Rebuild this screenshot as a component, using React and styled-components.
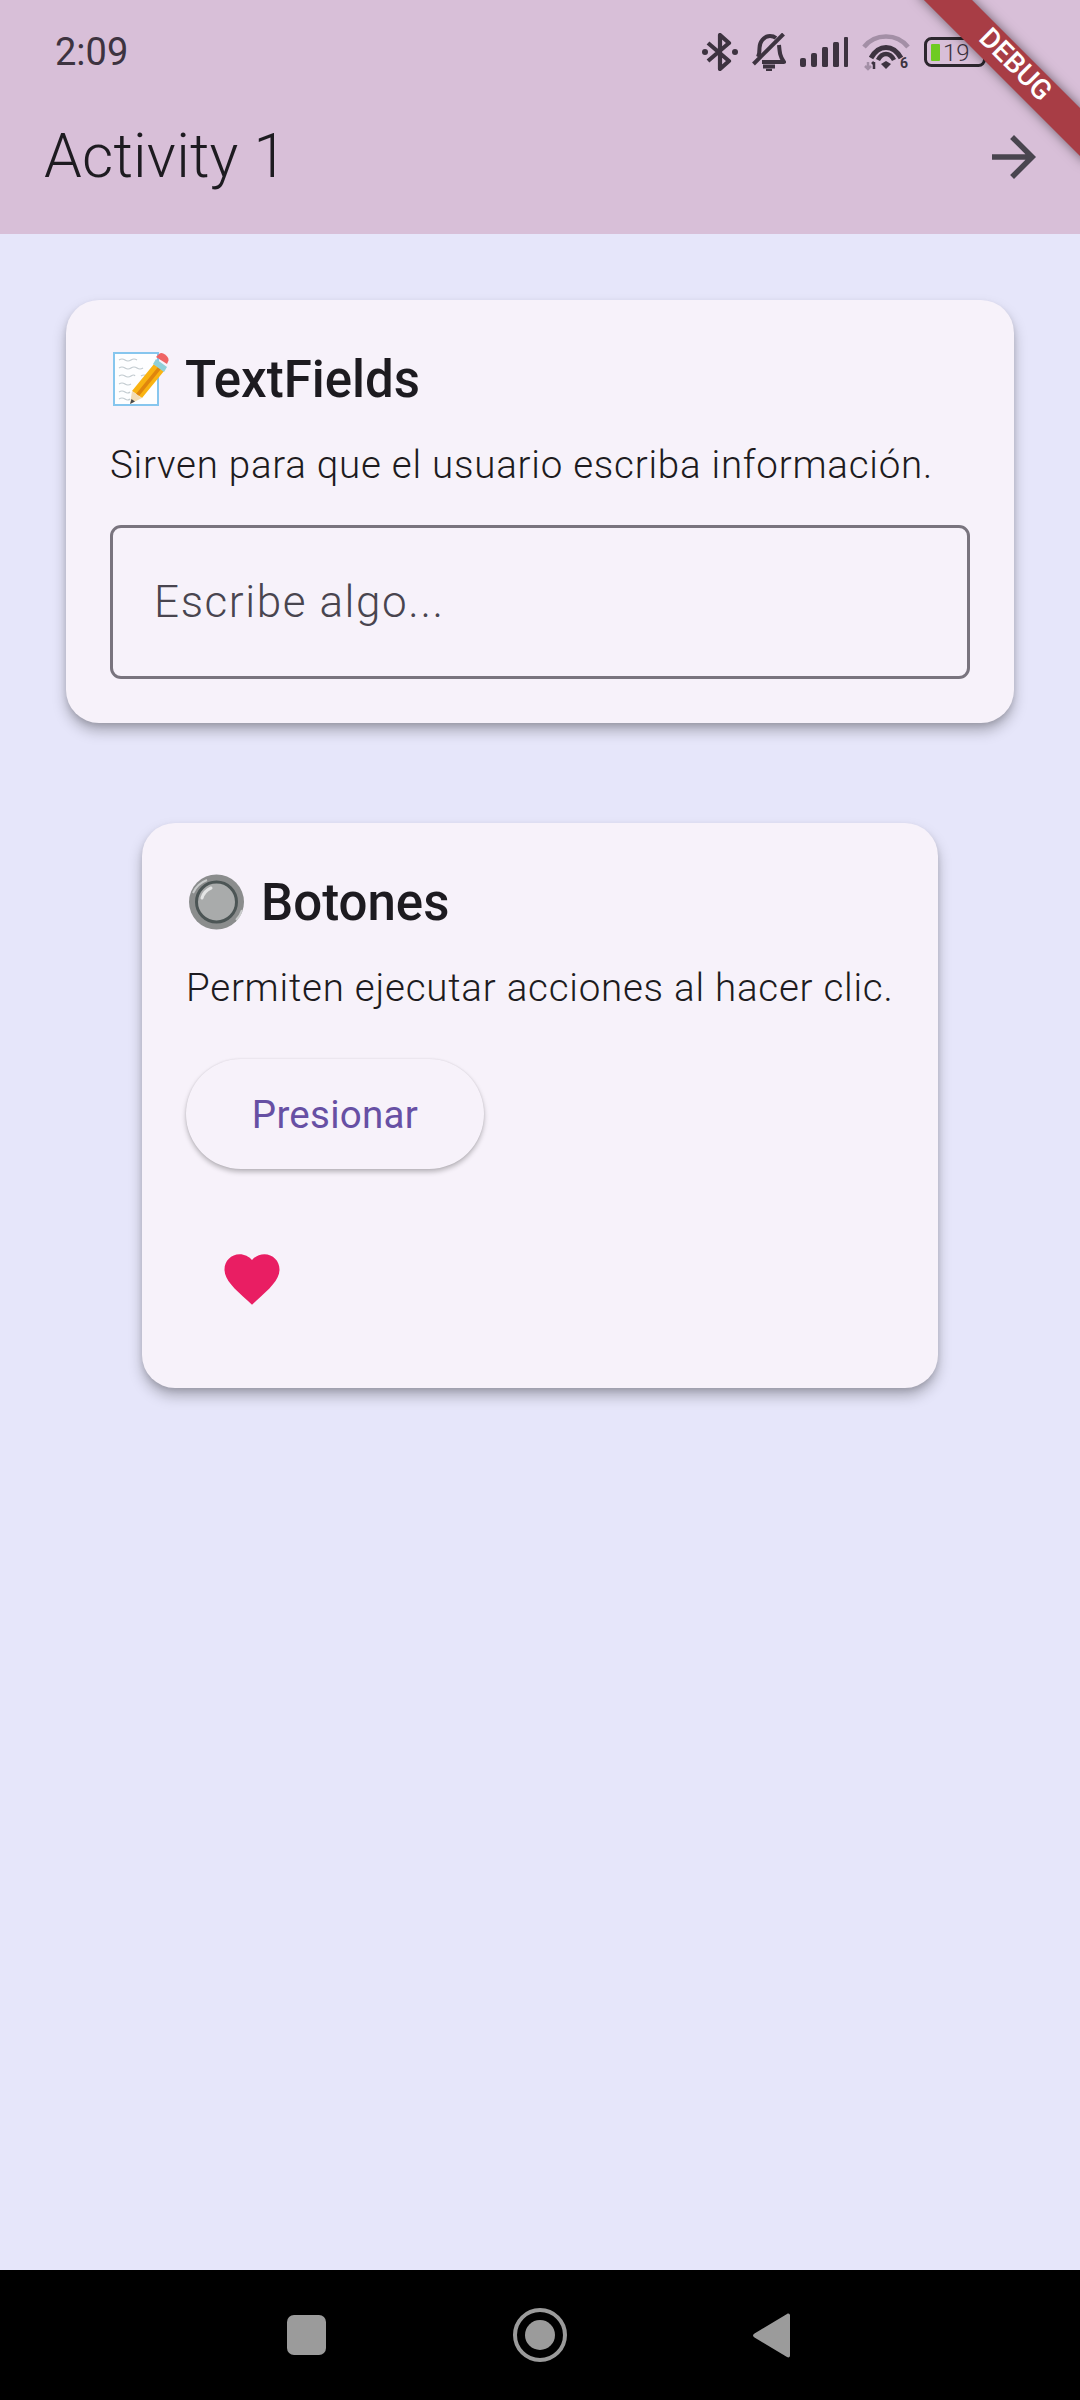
import React from "react";
import styled, { createGlobalStyle } from "styled-components";

const GlobalStyle = createGlobalStyle`
  html, body {
    margin: 0;
    padding: 0;
    background: #e6e6fa;
  }
  * {
    box-sizing: border-box;
  }
`;

const Screen = styled.div`
  position: relative;
  width: 1080px;
  height: 2400px;
  display: flex;
  flex-direction: column;
  overflow: hidden;
  background: #e6e6fa;
  font-family: Roboto, "Liberation Sans", sans-serif;
  color: #1d1b20;
`;

const Header = styled.header`
  flex: none;
  background: #d8bfd8;
`;

const StatusBar = styled.div`
  height: 79px;
  padding: 25px 68px 0 55px;
  display: flex;
  align-items: center;
  justify-content: space-between;
`;

const Clock = styled.span`
  font-size: 38px;
  font-weight: 450;
  color: #3d3340;
`;

const StatusIcons = styled.div`
  display: flex;
  align-items: center;
  gap: 14px;
`;

const Toolbar = styled.div`
  height: 155px;
  padding: 0 33px 0 44px;
  display: flex;
  align-items: center;
  justify-content: space-between;
`;

const PageTitle = styled.h1`
  margin: 0;
  font-size: 60.5px;
  font-weight: 300;
  line-height: 77px;
  letter-spacing: 0.2px;
`;

const Body = styled.main`
  flex: 1;
  padding: 66px 66px 0;
  display: flex;
  flex-direction: column;
  align-items: center;
  gap: 100px;
`;

const Card = styled.section`
  width: ${(p) => p.$width}px;
  padding: 44px;
  border-radius: 33px;
  background: #f7f2fa;
  box-shadow: 0 8px 14px rgba(0, 0, 0, 0.26), 0 3px 6px -1px rgba(0, 0, 0, 0.14);
`;

const CardTitle = styled.h2`
  margin: 0;
  padding-top: 3px;
  display: flex;
  align-items: center;
  gap: 15px;
  font-size: 51px;
  font-weight: 500;
  line-height: 66px;
  color: #1d1b20;
`;

const Emoji = styled.svg`
  margin-top: -3px;
`;

const Description = styled.p`
  margin: 19px 0 0;
  font-size: 38.5px;
  font-weight: 300;
  line-height: 66px;
  letter-spacing: 0.76px;
  white-space: nowrap;
  color: #1d1b20;
`;

const Field = styled.div`
  margin-top: 27px;
  height: 154px;
  padding: 0 41px;
  display: flex;
  align-items: center;
  border: 3px solid #79747e;
  border-radius: 11px;
  font-size: 44px;
  font-weight: 300;
  letter-spacing: 1.6px;
  color: #49454f;
`;

const PillButton = styled.button`
  margin-top: 38px;
  display: block;
  width: 298px;
  height: 110px;
  padding: 0;
  border: none;
  border-radius: 55px;
  background: #f7f2fa;
  box-shadow: 0 3px 5px rgba(0, 0, 0, 0.25), 0 0 2px rgba(0, 0, 0, 0.1);
  font-family: inherit;
  font-size: 38.5px;
  font-weight: 400;
  letter-spacing: 0.275px;
  color: #6750a4;
`;

const IconButton = styled.div`
  margin: 55px 0 10px 11px;
  width: 110px;
  height: 110px;
  display: flex;
  align-items: center;
  justify-content: center;
`;

const NavBar = styled.nav`
  flex: none;
  height: 130px;
  padding-left: 287px;
  display: flex;
  align-items: center;
  background: #000;
`;

const NavSquare = styled.div`
  width: 39px;
  height: 40px;
  border-radius: 7px;
  background: #9b9b9b;
`;

const NavHome = styled.div`
  margin-left: 187px;
  width: 54px;
  height: 54px;
  border: 4.5px solid #9b9b9b;
  border-radius: 50%;
  display: flex;
  align-items: center;
  justify-content: center;
  &::after {
    content: "";
    width: 30px;
    height: 30px;
    border-radius: 50%;
    background: #9b9b9b;
  }
`;

const NavBack = styled.svg`
  margin-left: 186px;
`;

const BannerClip = styled.div`
  position: absolute;
  top: 0;
  right: 0;
  width: 200px;
  height: 200px;
  overflow: hidden;
  pointer-events: none;
`;

const Banner = styled.div`
  position: absolute;
  left: 14px;
  top: 49px;
  width: 240px;
  height: 34px;
  padding-bottom: 5px;
  transform: rotate(45deg);
  display: flex;
  align-items: center;
  justify-content: center;
  background: #a83d45;
  box-shadow: 0 0 12px rgba(0, 0, 0, 0.5);
  font-size: 28px;
  font-weight: 500;
  color: #fff;
`;

const BluetoothIcon = () => (
  <svg width="36" height="38" viewBox="0 0 36 38" fill="none" stroke="#3d3340" strokeWidth="4.2">
    <path d="M6 10l21 18-9 8V2l9 8-21 18" strokeLinejoin="round" />
    <circle cx="3" cy="19" r="3" fill="#3d3340" stroke="none" />
    <circle cx="33" cy="19" r="3" fill="#3d3340" stroke="none" />
  </svg>
);

const BellOffIcon = () => (
  <svg width="34" height="38" viewBox="0 0 34 38" fill="none" stroke="#3d3340" strokeWidth="4">
    <path d="M6 24c1.500-3 1.500-5 1.500-9 0-6 4.500-12 10.500-12 2.500 0 4.500.8 6 2M27 12c.6 7 1 12 5 17H10" strokeLinejoin="round" />
    <path d="M1.500 31L31.500 1" />
    <path d="M11 33.500h12" />
    <path d="M14 37h6" strokeWidth="2.500" />
  </svg>
);

const SignalIcon = () => (
  <svg width="48" height="30" viewBox="0 0 48 30" fill="#3d3340">
    <rect x="0" y="21" width="6" height="9" rx="2" />
    <rect x="11" y="16" width="6" height="14" rx="2" />
    <rect x="22" y="10" width="6" height="20" rx="1.500" />
    <rect x="33" y="5" width="6" height="25" rx="1.500" />
    <rect x="44" y="0" width="4" height="30" rx="1" />
  </svg>
);

const WifiIcon = () => (
  <svg width="48" height="40" viewBox="0 0 48 40" fill="none" stroke="#3d3340" strokeWidth="4.5">
    <path d="M2 15C13 1 35 1 46 15" stroke="#a38fa6" />
    <path d="M9 26C17 12 31 12 39 26" strokeWidth="5" />
    <path d="M16 28C20 20 28 20 32 28" />
    <path d="M24 37l-5-5 5-3 5 3z" fill="#3d3340" stroke="none" />
    <path d="M6 30v7M3 34l3 3 3-3" stroke="#a38fa6" strokeWidth="2.500" />
    <path d="M12 37v-7M10 32l2-2" strokeWidth="2.500" />
    <text x="38" y="36" fontFamily="Roboto, sans-serif" fontSize="14" fontWeight="700" fill="#3d3340" stroke="none">
      6
    </text>
  </svg>
);

const BatteryIcon = () => (
  <svg width="88" height="34" viewBox="0 0 88 34" fill="none">
    <rect x="1.500" y="3.500" width="59" height="27" rx="6" stroke="#2c272e" strokeWidth="3" />
    <rect x="7" y="9" width="9" height="17" rx="1" fill="#6fcb22" />
    <text x="19" y="26" fontFamily="Roboto, sans-serif" fontSize="24" fontWeight="300" fill="#3d3340">
      19
    </text>
    <rect x="63" y="12" width="4" height="10" rx="1.500" fill="#2c272e" />
    <path d="M85 3l-9 14-5 1 6 2-2 8 10-14 4-1-5-2z" fill="#2c272e" />
  </svg>
);

const ArrowIcon = () => (
  <svg width="66" height="66" viewBox="0 0 24 24" fill="#49454f">
    <path d="M12 4l-1.410 1.410L16.170 11H4v2h12.170l-5.580 5.590L12 20l8-8z" />
  </svg>
);

const HeartIcon = () => (
  <svg width="66" height="66" viewBox="0 0 24 24" fill="#e91e63">
    <path d="M12 21.350l-1.450-1.320C5.400 15.360 2 12.280 2 8.500 2 5.420 4.420 3 7.500 3c1.740 0 3.410.81 4.500 2.090C13.090 3.810 14.760 3 16.500 3 19.580 3 22 5.420 22 8.500c0 3.780-3.400 6.860-8.550 11.540L12 21.350z" />
  </svg>
);

const MemoEmoji = () => (
  <Emoji width="60" height="56" viewBox="0 0 60 56">
    <rect x="4" y="2" width="44" height="52" fill="#fdfeff" stroke="#86c6ee" strokeWidth="2" />
    <g fill="none" stroke="#c2cbd0" strokeWidth="1.200">
      <path d="M9 9q3-2 6 0t6 0 6 0" />
      <path d="M9 17q3-2 6 0t6 0 6 0 6 0" />
      <path d="M9 25q3-2 6 0t6 0 4 0M31 25q3-2 6 0" />
      <path d="M9 33q3-2 6 0t6 0" />
      <path d="M9 41q3-2 6 0t5 0" />
      <path d="M9 48q3-2 6 0t5 0" />
    </g>
    <path d="M44 13l10 7-22 27-10-7z" fill="#f9b312" />
    <path d="M48 16l3 2-22 27-3-2z" fill="#e0860d" />
    <path d="M22 40l10 7-12 6z" fill="#f3dcb4" />
    <path d="M21.500 48l3.500 2.500-5 2.500z" fill="#4a4a4a" />
    <path d="M46 8l11 8-3 5-11-8z" fill="#8fcfd8" />
    <path d="M49 3c2-1.500 4-1 6 .5s4 3.500 3.500 6L57 13 46 6z" fill="#ef6464" />
  </Emoji>
);

const RadioEmoji = () => (
  <Emoji width="60" height="56" viewBox="0 0 60 56">
    <circle cx="30.500" cy="28" r="27.500" fill="#8b8d8d" />
    <path d="M7 19a25 25 0 0 1 14-13" fill="none" stroke="#c9cbcb" strokeWidth="2" />
    <path d="M50 46a25 25 0 0 0 6-10" fill="none" stroke="#c9cbcb" strokeWidth="2" />
    <circle cx="30.500" cy="28" r="20" fill="#a9abab" stroke="#4c5555" strokeWidth="3" />
    <path d="M16 24a16 16 0 0 1 9-10" fill="none" stroke="#e4e5e5" strokeWidth="3" strokeLinecap="round" />
  </Emoji>
);

const App = () => {
  return (
    <Screen>
      <GlobalStyle />
      <Header>
        <StatusBar>
          <Clock>2:09</Clock>
          <StatusIcons>
            <BluetoothIcon />
            <BellOffIcon />
            <SignalIcon />
            <WifiIcon />
            <BatteryIcon />
          </StatusIcons>
        </StatusBar>
        <Toolbar>
          <PageTitle>Activity 1</PageTitle>
          <ArrowIcon />
        </Toolbar>
      </Header>
      <Body>
        <Card $width={948}>
          <CardTitle>
            <MemoEmoji />
            TextFields
          </CardTitle>
          <Description>Sirven para que el usuario escriba información.</Description>
          <Field>Escribe algo...</Field>
        </Card>
        <Card $width={796}>
          <CardTitle>
            <RadioEmoji />
            Botones
          </CardTitle>
          <Description>Permiten ejecutar acciones al hacer clic.</Description>
          <PillButton>Presionar</PillButton>
          <IconButton>
            <HeartIcon />
          </IconButton>
        </Card>
      </Body>
      <NavBar>
        <NavSquare />
        <NavHome />
        <NavBack width="37" height="45" viewBox="0 0 37 45" fill="#9b9b9b">
          <path d="M34 1c1.500-1 3-.3 3 1.500v40c0 1.800-1.500 2.500-3 1.500L1.500 24.500c-2-1.200-2-2.800 0-4z" />
        </NavBack>
      </NavBar>
      <BannerClip>
        <Banner>DEBUG</Banner>
      </BannerClip>
    </Screen>
  );
};

export default App;
